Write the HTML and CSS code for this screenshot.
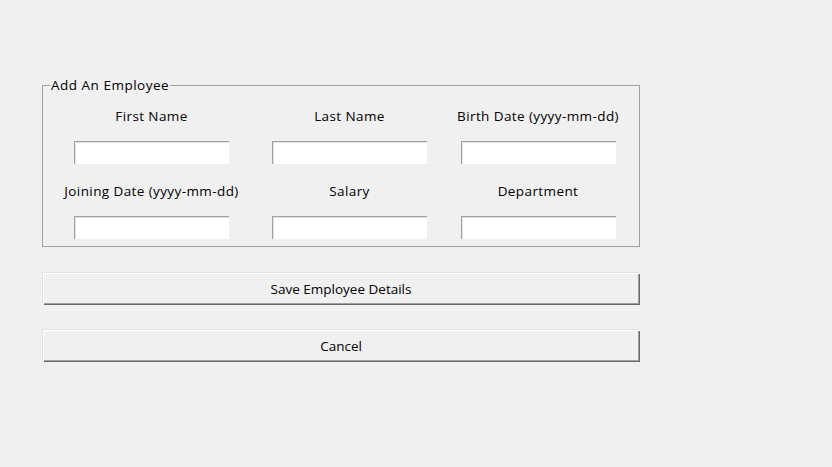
FILE: index.html
```html
<!DOCTYPE html>
<html>
<head>
<meta charset="utf-8">
<link rel="stylesheet" href="styles.css">
</head>
<body>
<main class="window">
  <fieldset class="group">
    <legend class="group-title">Add An Employee</legend>
    <div class="form-grid">
      <label class="field-label">First Name</label>
      <label class="field-label">Last Name</label>
      <label class="field-label">Birth Date (yyyy-mm-dd)</label>
      <div class="field-cell"><input class="entry" type="text"></div>
      <div class="field-cell"><input class="entry" type="text"></div>
      <div class="field-cell"><input class="entry" type="text"></div>
      <label class="field-label">Joining Date (yyyy-mm-dd)</label>
      <label class="field-label">Salary</label>
      <label class="field-label">Department</label>
      <div class="field-cell"><input class="entry" type="text"></div>
      <div class="field-cell"><input class="entry" type="text"></div>
      <div class="field-cell"><input class="entry" type="text"></div>
    </div>
  </fieldset>
  <button class="tk-button save">Save Employee Details</button>
  <button class="tk-button cancel">Cancel</button>
</main>
</body>
</html>
```

FILE: styles.css
```css
html, body {
  margin: 0;
  padding: 0;
  background: #f0f0f0;
  width: 832px;
  height: 467px;
  overflow: hidden;
}

body {
  font-family: "Open Sans", "Noto Sans", sans-serif;
  font-size: 13.5px;
  letter-spacing: 0.4px;
  color: #000;
}

.window {
  padding: 77px 0 0 42px;
  display: flex;
  flex-direction: column;
  align-items: flex-start;
}

.group {
  margin: 0;
  padding: 0 0 7px 0;
  border: 1px solid #a0a0a0;
  width: 598px;
  box-sizing: border-box;
  min-width: 0;
  flex-shrink: 0;
}

.group-title {
  margin-left: 7px;
  padding: 0 1px;
  line-height: 16px;
  height: 16px;
  letter-spacing: 0.5px;
}

.form-grid {
  display: grid;
  grid-template-columns: 217px 179px 198px;
  grid-template-rows: 34px 41px 34px 23px;
  margin-top: 14px;
}

.field-label {
  display: flex;
  justify-content: center;
  align-items: flex-start;
  white-space: nowrap;
  line-height: 18px;
}

.field-cell {
  display: flex;
  justify-content: center;
  align-items: flex-start;
}

.entry {
  width: 155px;
  height: 23px;
  box-sizing: border-box;
  margin: 0;
  padding: 0 3px;
  border: none;
  background: #fff;
  box-shadow: inset 1px 1px 0 #a0a0a0, inset 2px 2px 0 #e3e3e3, inset -1px -1px 0 #ffffff;
  font: inherit;
}

.tk-button {
  width: 598px;
  height: 33px;
  flex-shrink: 0;
  box-sizing: border-box;
  margin: 0;
  padding: 0;
  border: none;
  background: #f0f0f0;
  font: inherit;
  color: #000;
  box-shadow: inset 1px 1px 0 #e3e3e3, inset 2px 2px 0 #ffffff, inset -1px -1px 0 #696969, inset -2px -2px 0 #a0a0a0;
}

.save {
  margin-top: 25px;
}

.cancel {
  margin-top: 24px;
}
```
